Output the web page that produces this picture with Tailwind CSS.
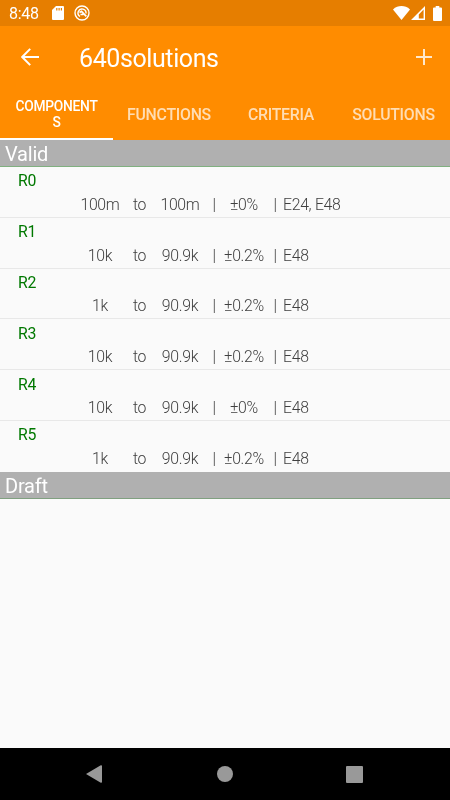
<!DOCTYPE html>
<html lang="en">
<head>
    <meta charset="UTF-8">
    <meta name="viewport" content="width=device-width, initial-scale=1.0">
    <script src="https://cdn.jsdelivr.net/npm/@tailwindcss/browser@4"></script>
    <title>640solutions</title>
</head>
<body class="bg-[#fafafa] font-['Roboto',sans-serif] antialiased">
    <div class="w-[450px] h-[800px] flex flex-col overflow-hidden will-change-transform">

        <!-- status bar -->
        <div class="h-[26px] shrink-0 bg-[#e67e00] flex items-center text-white pl-[9px] pr-2">
            <span class="text-[16px] tracking-[-0.3px] leading-none w-[43px] pt-[2px]">8:48</span>
            <svg class="w-3 h-[14px]" viewBox="0 0 12 14" fill="white">
                <path fill-rule="evenodd" d="M4 0h7a1 1 0 0 1 1 1v12a1 1 0 0 1-1 1H1a1 1 0 0 1-1-1V4zM4.2 2v2.5h1.2V2zM6.5 2v2.5h1.2V2zM8.8 2v2.5H10V2z"/>
            </svg>
            <svg class="w-4 h-4 ml-[10px]" viewBox="0 0 16 16" fill="none" stroke="white">
                <circle cx="8" cy="8" r="7" stroke-width="1.4"/>
                <path d="M6 11.5A4 4 0 1 1 12 8.5" stroke-width="1.4"/>
                <path d="M5.5 7.5l2-1.2 4.8 5M6.5 9.5h3" stroke-width="1.7"/>
            </svg>
            <svg class="w-[17px] h-[14px] ml-auto" viewBox="0 0 17 14" fill="white">
                <path d="M0 3.4C5 -1 12 -1 17 3.4L8.5 14z"/>
            </svg>
            <svg class="w-[14px] h-[14px] ml-[1px]" viewBox="0 0 14 14">
                <path fill="white" fill-rule="evenodd" d="M14 0v14H0zM12.6 3.6L7.8 8.4v4.2h4.8z"/>
            </svg>
            <svg class="w-[9px] h-[15px] ml-2" viewBox="0 0 9 15" fill="white">
                <path d="M2.7 0h3.6v1.5H8a1 1 0 0 1 1 1V14a1 1 0 0 1-1 1H1a1 1 0 0 1-1-1V2.5a1 1 0 0 1 1-1h1.7z"/>
            </svg>
        </div>

        <!-- toolbar -->
        <header class="h-[63px] shrink-0 bg-[#ff8c00] flex items-center pl-[21px] pr-[18px] text-white">
            <svg class="w-[18px] h-[18px] mb-[2px]" viewBox="0 0 18 18" fill="none" stroke="white" stroke-width="2">
                <path d="M18 9H1.6M9.2 .9L1.2 9l8 8.1"/>
            </svg>
            <h1 class="ml-10 mt-[2px] text-[25px] tracking-[-0.4px] leading-none">640solutions</h1>
            <svg class="w-4 h-4 ml-auto mb-[2px]" viewBox="0 0 16 16" stroke="#ffe8cc" stroke-width="2">
                <path d="M8 0v16M0 8h16"/>
            </svg>
        </header>

        <!-- tabs -->
        <nav class="h-[51px] shrink-0 bg-[#ff8c00] grid grid-cols-[113px_112px_112px_113px] text-center font-medium text-[15.8px] tracking-[-0.25px] text-white/70">
            <div class="h-[51px] text-white text-[13.8px] leading-[16px] pt-[9px] border-b-2 border-white">COMPONENT<br>S</div>
            <div class="leading-[51px]">FUNCTIONS</div>
            <div class="leading-[51px]">CRITERIA</div>
            <div class="leading-[51px]">SOLUTIONS</div>
        </nav>

        <main class="grow bg-[#fafafa]">
            <h2 class="h-[27px] bg-[#b0b0b0] border-b border-[#80b080] pl-[5px] text-[20px] tracking-[-0.2px] leading-[29px] text-white">Valid</h2>
            <ul id="components"></ul>
            <h2 class="h-[27px] bg-[#b0b0b0] border-b border-[#80a080] pl-[5px] text-[20px] tracking-[-0.2px] leading-[29px] text-white">Draft</h2>
        </main>

        <!-- navigation bar -->
        <footer class="h-[52px] shrink-0 bg-black flex items-center justify-between pl-[86px] pr-[87px]">
            <svg class="w-4 h-[18px]" viewBox="0 0 16 18" fill="#999999"><path d="M0 9L14.8 .2Q16 0 16 1v16q0 1-1.2 .8z"/></svg>
            <div class="size-4 rounded-full bg-[#999999] ml-[2px]"></div>
            <div class="size-[17px] rounded-[1px] bg-[#999999]"></div>
        </footer>
    </div>
</body>
<script>
    const components = [
        ["R0", "100m", "100m", "±0%", "E24, E48"],
        ["R1", "10k", "90.9k", "±0.2%", "E48"],
        ["R2", "1k", "90.9k", "±0.2%", "E48"],
        ["R3", "10k", "90.9k", "±0.2%", "E48"],
        ["R4", "10k", "90.9k", "±0%", "E48"],
        ["R5", "1k", "90.9k", "±0.2%", "E48"],
    ];
    const list = document.getElementById("components");

    components.forEach(([name, min, max, tolerance, series]) => {
        const row = document.createElement("li");
        row.className = "h-[50.8px] border-b border-[#e8e8e8] last:border-b-0 text-[15.8px] tracking-[-0.3px] leading-[23.4px] pt-[2.4px]";
        row.innerHTML = `
            <div class="pl-[18px] text-[#007800]">${name}</div>
            <div class="grid grid-cols-[40px_39px_42px_26px_34px_28px_1fr] pl-[80px] text-center font-light text-[#404040]">
                <span>${min}</span>
                <span>to</span>
                <span>${max}</span>
                <span>|</span>
                <span class="whitespace-nowrap -mx-2">${tolerance}</span>
                <span>|</span>
                <span class="text-left -ml-[6px]">${series}</span>
            </div>`;
        list.appendChild(row);
    });
</script>
</html>
